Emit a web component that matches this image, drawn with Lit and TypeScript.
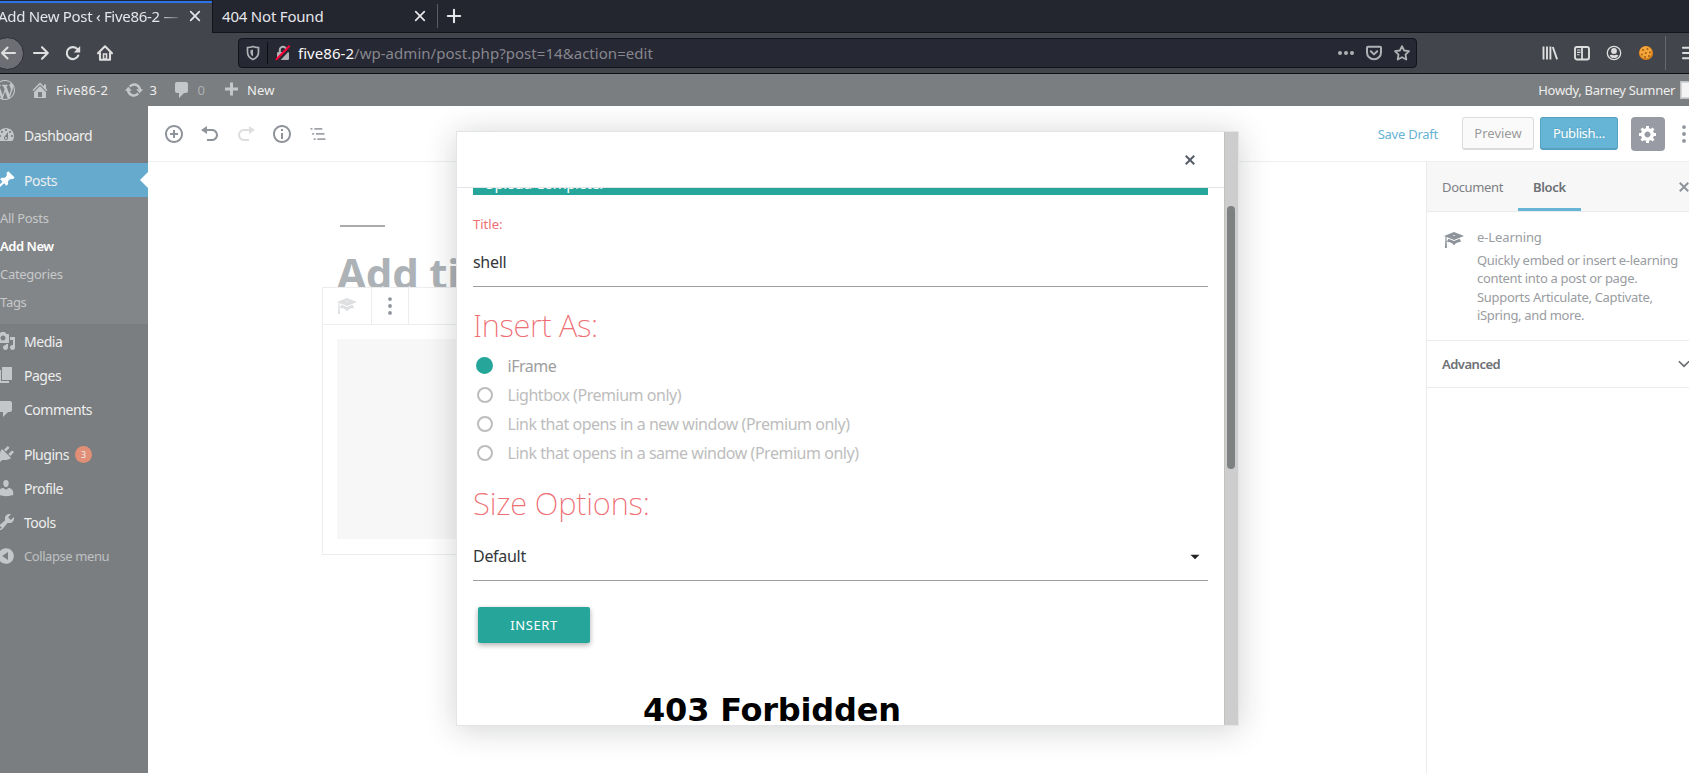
import { LitElement, html, css, svg } from "lit";
import { customElement, property } from "lit/decorators.js";

const D: Record<string, string> = {
  wp: "M20 10c0-5.51-4.49-10-10-10C4.48 0 0 4.49 0 10c0 5.52 4.48 10 10 10 5.51 0 10-4.48 10-10zM7.78 15.37L4.37 6.22c.55-.02 1.17-.08 1.17-.08.5-.06.44-1.13-.06-1.11 0 0-1.45.11-2.37.11-.18 0-.37 0-.58-.01C4.12 2.69 6.87 1.11 10 1.11c2.33 0 4.45.87 6.05 2.34-.68-.11-1.65.39-1.65 1.58 0 .74.45 1.36.9 2.1.35.61.55 1.36.55 2.46 0 1.49-1.4 5-1.4 5l-3.03-8.37c.54-.02.82-.17.82-.17.5-.05.44-1.25-.06-1.22 0 0-1.44.12-2.38.12-.87 0-2.33-.12-2.33-.12-.5-.03-.56 1.2-.06 1.22l.92.08 1.26 3.41zM17.41 10c.24-.64.74-1.87.43-4.25.7 1.29 1.05 2.71 1.05 4.25 0 3.29-1.73 6.24-4.4 7.78.97-2.59 1.94-5.2 2.92-7.78zM6.1 18.09C3.12 16.65 1.11 13.53 1.11 10c0-1.3.23-2.48.72-3.59C3.25 10.3 4.67 14.2 6.1 18.09zm4.03-6.63l2.58 6.98c-.86.29-1.76.45-2.71.45-.79 0-1.57-.11-2.29-.33.81-2.38 1.62-4.74 2.42-7.1z",
  home: "M16 8.5l1.53 1.53-1.06 1.06L10 4.6l-6.47 6.49-1.06-1.06L10 2.5l4 4v-2h2v4zm-6-2.46l6 5.99V18H4v-5.97zM12 17v-5H8v5h4z",
  update: "M10.2 3.28c3.53 0 6.43 2.61 6.92 6h2.08l-3.5 4-3.5-4h2.32c-.45-1.97-2.21-3.45-4.32-3.45-1.45 0-2.73.71-3.54 1.78L4.95 5.66C6.23 4.2 8.11 3.28 10.2 3.28zm-.4 13.44c-3.52 0-6.43-2.61-6.92-6H.8l3.5-4c1.17 1.33 2.33 2.67 3.5 4H5.48c.45 1.97 2.21 3.45 4.32 3.45 1.45 0 2.73-.71 3.54-1.78l1.71 1.95c-1.28 1.46-3.15 2.38-5.25 2.38z",
  comments: "M5 2h9c1.1 0 2 .9 2 2v7c0 1.1-.9 2-2 2h-2l-5 5v-5H5c-1.1 0-2-.9-2-2V4c0-1.1.9-2 2-2z",
  plus: "M17 7.5v3h-5v5H9v-5H4v-3h5v-5h3v5h5z",
  dashboard: "M3.76 16h12.48c1.1-1.37 1.76-3.11 1.76-5 0-4.42-3.58-8-8-8s-8 3.58-8 8c0 1.89.66 3.63 1.76 5zM10 4c.55 0 1 .45 1 1s-.45 1-1 1-1-.45-1-1 .45-1 1-1zM6 6c.55 0 1 .45 1 1s-.45 1-1 1-1-.45-1-1 .45-1 1-1zm8 0c.55 0 1 .45 1 1s-.45 1-1 1-1-.45-1-1 .45-1 1-1zm-5.37 5.55L12 7v6c0 1.1-.9 2-2 2s-2-.9-2-2c0-.57.24-1.08.63-1.45zM4 10c.55 0 1 .45 1 1s-.45 1-1 1-1-.45-1-1 .45-1 1-1zm12 0c.55 0 1 .45 1 1s-.45 1-1 1-1-.45-1-1 .45-1 1-1zm-5 3c0-.55-.45-1-1-1s-1 .45-1 1 .45 1 1 1 1-.45 1-1z",
  post: "M10.44 3.02l1.82-1.82 6.36 6.35-1.83 1.82c-1.05-.68-2.48-.57-3.41.36l-.75.75c-.92.93-1.04 2.35-.35 3.41l-1.83 1.82-2.41-2.41-2.8 2.79c-.42.42-3.38 2.71-3.8 2.29s1.86-3.39 2.28-3.81l2.79-2.79L4.1 9.36l1.83-1.82c1.05.69 2.48.57 3.4-.36l.75-.75c.93-.92 1.05-2.35.36-3.41z",
  media: "M13 11V4c0-.55-.45-1-1-1h-1.67L9 1H5L3.67 3H2c-.55 0-1 .45-1 1v7c0 .55.45 1 1 1h10c.55 0 1-.45 1-1zM7 4.5c1.38 0 2.5 1.12 2.5 2.5S8.38 9.5 7 9.5 4.5 8.38 4.5 7 5.62 4.5 7 4.5zM14 6h5v10.5c0 1.38-1.12 2.5-2.5 2.5S14 17.88 14 16.5s1.12-2.5 2.5-2.5c.17 0 .34.02.5.05V9h-3V6zm-4 8.05V13h2v3.5c0 1.38-1.12 2.5-2.5 2.5S7 17.88 7 16.5 8.12 14 9.5 14c.17 0 .34.02.5.05z",
  page: "M6 15V2h10v13H6zm-1 1h8v2H3V5h2v11z",
  plugins: "M13.11 4.36L9.87 7.6 8 5.73l3.24-3.24c.35-.34 1.05-.2 1.56.32.52.51.66 1.21.31 1.55zm-8 1.77l.91-1.12 9.01 9.01-1.19.84c-.71.71-2.63 1.16-3.82 1.16H6.14L4.9 17.26c-.59.59-1.54.59-2.12 0-.59-.58-.59-1.53 0-2.12l1.24-1.24v-3.88c0-1.13.4-3.19 1.09-3.89zm7.26 3.97l3.24-3.24c.34-.35 1.04-.21 1.55.31.52.51.66 1.21.31 1.55l-3.24 3.25z",
  users: "M10 9.25c-2.27 0-2.73-3.44-2.73-3.44C7 4.02 7.82 2 9.97 2c2.16 0 2.98 2.02 2.71 3.81 0 0-.41 3.44-2.68 3.44zm0 2.57L12.72 10c2.39 0 4.52 2.33 4.52 4.53v2.49s-3.65 1.13-7.24 1.13c-3.65 0-7.24-1.13-7.24-1.13v-2.49c0-2.25 1.94-4.48 4.47-4.48z",
  tools: "M16.68 9.77c-1.34 1.34-3.3 1.67-4.95.99l-5.41 6.52c-.99.99-2.59.99-3.58 0s-.99-2.59 0-3.57l6.52-5.42c-.68-1.65-.35-3.61.99-4.95 1.28-1.28 3.12-1.62 4.72-1.06l-2.89 2.89 2.82 2.82 2.86-2.87c.53 1.58.18 3.39-1.08 4.65zM3.81 16.21c.4.39 1.04.39 1.43 0 .4-.4.4-1.04 0-1.43-.39-.4-1.03-.4-1.43 0-.39.39-.39 1.03 0 1.43z",
  collapse: "M10 2.16c4.33 0 7.84 3.51 7.84 7.84s-3.51 7.84-7.84 7.84S2.16 14.33 2.16 10 5.71 2.16 10 2.16zm2 11.72V6.12L6.18 9.97z",
  insert: "M10 1c-5 0-9 4-9 9s4 9 9 9 9-4 9-9-4-9-9-9zm0 16c-3.9 0-7-3.1-7-7s3.1-7 7-7 7 3.1 7 7-3.1 7-7 7zm1-11H9v3H6v2h3v3h2v-3h3V9h-3V6z",
  undo: "M12 5H7V2L1 6l6 4V7h5c2.2 0 4 1.8 4 4s-1.8 4-4 4H7v2h5c3.3 0 6-2.7 6-6s-2.7-6-6-6z",
  redo: "M8 5h5V2l6 4-6 4V7H8c-2.2 0-4 1.8-4 4s1.8 4 4 4h5v2H8c-3.3 0-6-2.7-6-6s2.7-6 6-6z",
  info: "M9 15h2V9H9v6zm1-14c-5 0-9 4-9 9s4 9 9 9 9-4 9-9-4-9-9-9zm0 16c-3.9 0-7-3.1-7-7s3.1-7 7-7 7 3.1 7 7-3.1 7-7 7zM9 7h2V5H9v2z",
  outline: "M2.5 4h2v1.7h-2zM6.3 4h8v1.7h-8zM4.2 9h2v1.7h-2zM8 9h8.5v1.7H8zM5.7 14.2h2v1.7h-2zM9.3 14.2h8.2v1.7H9.3z",
  gear: "M18 12h-2.18c-.17.7-.44 1.35-.81 1.93l1.54 1.54-2.1 2.1-1.54-1.54c-.58.36-1.23.63-1.91.79V19H8v-2.18c-.68-.16-1.33-.43-1.91-.79l-1.54 1.54-2.12-2.12 1.54-1.54c-.36-.58-.63-1.23-.79-1.91H1V9.03h2.17c.16-.7.44-1.35.8-1.94L2.43 5.55l2.1-2.1 1.54 1.54c.58-.37 1.24-.64 1.93-.81V2h3v2.18c.68.16 1.33.43 1.91.79l1.54-1.54 2.12 2.12-1.54 1.54c.36.59.64 1.24.8 1.94H18V12zm-8.5 1.5c1.66 0 3-1.34 3-3s-1.34-3-3-3-3 1.34-3 3 1.34 3 3 3z",
  learn: "M10 10L2.54 7.02 3 18H1l.48-11.41L0 6l10-4 10 4zm0-5c-.55 0-1 .22-1 .5s.45.5 1 .5 1-.22 1-.5-.45-.5-1-.5zm0 6l5.57-2.23c.71.94 1.2 2.07 1.36 3.3-.3-.04-.61-.07-.93-.07-2.55 0-4.78 1.37-6 3.41C8.78 13.37 6.55 12 4 12c-.32 0-.63.03-.93.07.16-1.23.65-2.36 1.36-3.3z",
  close: "M14.95 6.46L11.41 10l3.54 3.54-1.41 1.41L10 11.42l-3.53 3.53-1.42-1.42L8.58 10 5.05 6.47l1.42-1.42L10 8.58l3.54-3.53z",
  dots: "M10 1.2a1.9 1.9 0 1 1 0 3.8 1.9 1.9 0 0 1 0-3.8zm0 6.9a1.9 1.9 0 1 1 0 3.8 1.9 1.9 0 0 1 0-3.8zm0 6.9a1.9 1.9 0 1 1 0 3.8 1.9 1.9 0 0 1 0-3.8z",
  caret: "M5.500 7.800h9l-4.500 4.400z",
  chevron: "M4.300 5.800L2.800 7.300l7.200 7 7.200-7-1.500-1.500-5.700 5.500z",
};

@customElement("dash-icon")
export class DashIcon extends LitElement {
  static styles = css`
    :host { display: block; flex: none; width: 20px; height: 20px; }
    svg { display: block; width: 100%; height: 100%; }
  `;
  @property() name = "";
  render() {
    return html`<svg viewBox="0 0 20 20" fill="currentColor"><path fill-rule="evenodd" d=${D[this.name]}></path></svg>`;
  }
}

const line = (d: string, w = 2) => svg`<path d=${d} fill="none" stroke="currentColor" stroke-width=${w} stroke-linecap="round" stroke-linejoin="round"></path>`;
const C: Record<string, unknown> = {
  x: line("M3.700 3.700l8.600 8.600M12.300 3.700l-8.600 8.600", 1.7),
  plus: line("M8 1.8v12.400M1.800 8h12.400", 2.1),
  back: line("M15 8H2M7.5 2.5L2 8l5.500 5.500", 2.1),
  fwd: line("M1 8h13.500M9 2.200L14.800 8 9 13.800", 2.1),
  reload: svg`${line("M13.300 10.500a6 6 0 1 1-1.300-6.700l1.500 1.500", 2.1)}<path d="M15.200 1v6.500H8.800z" fill="currentColor"></path>`,
  home: svg`${line("M1 8.300l7-7 7 7M3 8v6.700h10V8", 2.1)}<path d="M6.500 14V9h3v5z" fill="none" stroke="currentColor" stroke-width="1.600"></path>`,
  shield: svg`<path d="M8 1.500c2 .9 3.800 1 5.500 1V7c0 3.500-2 6-5.500 7.500C4.500 13 2.500 10.500 2.500 7V2.500c1.700 0 3.500-.1 5.500-1z" fill="none" stroke="currentColor" stroke-width="1.700"></path><path d="M8 4.500v7C6 10 5.400 9 5.400 7V5.200C6.500 5.100 7 5 8 4.500z" fill="currentColor"></path>`,
  lock: svg`<rect x="2" y="7" width="12" height="8" rx="1.200" fill="currentColor"></rect><path d="M4.800 8V5a3.200 3.200 0 0 1 6.400 0v3" fill="none" stroke="currentColor" stroke-width="2"></path><path d="M2.300 16L15.300 2" stroke="#262833" stroke-width="3.500"></path><path d="M1.500 14.300L14.200 1.200" stroke="#ff0039" stroke-width="2" stroke-linecap="round"></path>`,
  more: svg`<circle cx="2" cy="8" r="2" fill="currentColor"></circle><circle cx="8" cy="8" r="2" fill="currentColor"></circle><circle cx="14" cy="8" r="2" fill="currentColor"></circle>`,
  pocket: svg`${line("M1.900 1.800h12.200c.5 0 .9.400.9.900V7.500a7 6.800 0 0 1-14 0V2.700c0-.5.400-.9.900-.9z", 2)}${line("M4.800 6.300L8 9.400l3.200-3.100", 2)}`,
  star: line("M8 1.100l2.100 4.400 4.900.7-3.500 3.400.8 4.900L8 12.200l-4.300 2.300.8-4.900L1 6.200l4.900-.7z", 1.8),
  library: svg`<path d="M1.500 1.500v13M5 1.500v13M8.400 1.500v13M10.800 2l4.300 12.400" stroke="currentColor" stroke-width="1.900" fill="none"></path>`,
  side: svg`<rect x="1" y="2" width="14" height="12.500" rx="2" fill="none" stroke="currentColor" stroke-width="1.900"></rect><path d="M8 2v12" stroke="currentColor" stroke-width="1.800"></path><path d="M3 5h3.500M3 7.400h3.500M3 9.800h2.500" stroke="currentColor" stroke-width="1.100"></path>`,
  account: svg`<circle cx="8" cy="8" r="6.700" fill="none" stroke="currentColor" stroke-width="1.300"></circle><circle cx="8" cy="6" r="2.900" fill="currentColor"></circle><path d="M3.600 10.500c1-.9 2.300-.9 3-.6.900.4 1.900.4 2.800 0 .7-.3 2-.3 3 .6-.8 1.700-2.500 2.600-4.400 2.600s-3.600-.9-4.400-2.600z" fill="currentColor"></path>`,
  cookie: svg`<circle cx="8" cy="8" r="7.100" fill="#d9811b"></circle><circle cx="7.600" cy="7.300" r="6" fill="#f4a63a"></circle><g fill="#a35a14"><circle cx="5" cy="5" r="1"></circle><circle cx="9.500" cy="4" r=".9"></circle><circle cx="7.800" cy="8" r="1"></circle><circle cx="12" cy="7.500" r="1"></circle><circle cx="4" cy="9.500" r=".9"></circle><circle cx="7" cy="12" r="1"></circle><circle cx="11" cy="11" r="1"></circle></g>`,
  menu: line("M2 2.800h13M2 8h13M2 13.200h13", 2.1),
};

@customElement("chrome-icon")
export class ChromeIcon extends LitElement {
  static styles = css`
    :host { display: block; flex: none; width: 16px; height: 16px; }
    svg { display: block; width: 100%; height: 100%; overflow: visible; }
  `;
  @property() name = "";
  render() {
    return html`<svg viewBox="0 0 16 16">${C[this.name]}</svg>`;
  }
}

const menuMid = [["media", "Media"], ["page", "Pages"], ["comments", "Comments"]];
const menuLow = [["plugins", "Plugins"], ["users", "Profile"], ["tools", "Tools"]];

@customElement("app-root")
export class AppRoot extends LitElement {
  static styles = css`
    :host{display:block;width:1689px;height:773px;overflow:hidden;position:relative;font-family:"Noto Sans","Open Sans",sans-serif;font-size:13px;background:#fff;color:#555d66}
    *{box-sizing:border-box}
    .tabs{display:flex;height:33px;background:#23252f;color:#e6e6ea;font-size:15px;letter-spacing:-.2px}
    .tab{display:flex;flex:none;align-items:center;height:33px;border-bottom:1px solid #14151b;border-left:1px solid #14151b;width:225px;padding:0 9px}
    .tab.on{width:212px;background:#42454c;border:0;padding:0 9px 1px 0;box-shadow:inset 0 1px #23252f,inset 0 3px #2b73e8;letter-spacing:-.3px}
    .tab span{flex:1;white-space:nowrap;overflow:hidden}
    .tab.on span{margin-left:-2px;-webkit-mask-image:linear-gradient(90deg,#000 160px,transparent 186px)}
    .rest{flex:1;display:flex;align-items:center;border-bottom:1px solid #14151b}
    .sep{width:1px;height:24px;background:#5b5d66;margin-right:8px}
    .nav{display:flex;align-items:center;height:41px;background:#42454c;border-bottom:1px solid #0f1013;color:#dededf}
    .nav>*{flex:none}
    .back{display:grid;place-items:center;width:33px;height:33px;border-radius:50%;background:#6c6e73;border:1px solid #2d2f35;margin-left:-9px;margin-right:9px}
    .ni{margin-right:16px}
    .url{display:flex;align-items:center;width:1179px;height:30px;border:1px solid #12131a;border-radius:4px;background:#262833;margin-left:125px;color:#b0b1b5;padding:0 6px;font-size:15px}
    .url i{width:1px;height:22px;background:#0d0e13;margin:0 7px 0 6px}
    .url p{flex:1;margin:0 0 0 7px;color:#86878e;letter-spacing:.04px}
    .url b{font-weight:400;color:#f9f9fa}
    .url .gp{margin-left:12px}
    .acts{display:flex;align-items:center;margin-left:125px;gap:16px}
    .acts i{width:1px;height:34px;background:#66686e;margin-left:-5px;margin-right:-1px}
    .bar{display:flex;align-items:center;height:32px;background:#7b7e80;color:#eee}
    .bar span{flex:none;margin-left:6px;white-space:nowrap}
    .bar dash-icon{color:#c4c7ca}
    .bar .wp{margin:0 15px 0 -5px}
    .bar .site{width:67.500px;letter-spacing:.2px}
    .bar .upd{width:22px}
    .bar .cmt{width:23.500px;color:#adb0b2}
    .bar .new{flex:1;letter-spacing:.2px}
    .bar .howdy{letter-spacing:-.3px;margin-right:5px}
    .bar .av{width:18px;height:18px;border:1px solid #bfc1c2;background:#f4f4f4;box-shadow:inset 0 0 0 1px #d5d5d5;margin-right:-9px}
    .body{display:grid;grid-template-columns:148px 1fr;height:667px}
    .side{background:#7b7e80;color:#eee;font-size:14px;letter-spacing:-.48px;overflow:hidden;padding-top:12px}
    .mi{display:flex;align-items:center;height:34px;position:relative}
    .mi dash-icon{margin-left:-4px;margin-right:8px;color:#c4c7ca}
    .mi.on{background:#66abce;margin-top:11px}
    .mi.on dash-icon{color:#fff}
    .mi.on::after{content:"";position:absolute;right:0;top:9px;border:8px solid transparent;border-left:0;border-right-color:#fff}
    .sub{background:#838688;height:127px;padding-top:7px;font-size:13px;letter-spacing:-.3px;color:#c6c9cb}
    .sub div{height:28px;line-height:28px}
    .sub .cur{font-weight:600;color:#fff;letter-spacing:-.45px}
    .badge{width:17px;height:17px;border-radius:50%;background:#e18f77;font-size:9px;letter-spacing:0;display:grid;place-items:center;margin-left:6px}
    .gap{height:11px}
    .col{font-size:13px;letter-spacing:-.42px;color:#bfc1c3}
    .main{display:grid;grid-template-columns:minmax(0,1fr);grid-template-rows:56px 1fr}
    .tools{display:flex;align-items:center;border-bottom:1px solid #edeff0;padding-left:16px;color:#8f949b}
    .tools>*{flex:none}
    .tools .l{display:flex;gap:16px;flex:1}
    .dis{opacity:.3}
    .thin{opacity:.85}
    .draft{color:#66b3d3;margin-right:24px;letter-spacing:-.25px}
    .btn{display:grid;place-items:center;height:33px;border-radius:3px;border:1px solid #dcdcdc;border-bottom-width:2px;background:#fafafa;color:#9b9b9b;width:72px}
    .btn.p{width:78px;margin:0 13px 0 6px;background:#66b5d6;border-color:#57a0bf;color:#fff;text-shadow:0 -1px 1px #57a0bf;letter-spacing:-.4px}
    .set{display:grid;place-items:center;width:34px;height:34px;border-radius:4px;background:#989ba3;color:#fff;margin-right:9px}
    .kebab{margin-right:-5px}
    .cols{display:grid;grid-template-columns:minmax(0,1fr) 263px}
    .canvas{padding:63px 0 0 174px;overflow:hidden}
    .rule{width:45px;height:2px;background:#ababab;margin-left:18px}
    .ttl{font-weight:700;font-size:42px;line-height:56px;height:60px;margin-left:15px;color:#adb2b7;padding-top:18px;overflow:hidden;letter-spacing:-.2px}
    .block{width:800px;border:1px solid #ebedee;height:268px;background:#fff}
    .bt{display:flex;height:37px;border-bottom:1px solid #ebedee}
    .bt div{display:grid;place-items:center;border-right:1px solid #ebedee;width:49px;color:#dddfe1}
    .bt div+div{width:37px;color:#8f949b}
    .ph{margin:14px;height:200px;background:#f7f7f7}
    .panel{border-left:1px solid #e9ebec;background:#fff;overflow:hidden}
    .pt{display:flex;height:50px;background:#f7f7f7;border-bottom:1px solid #e9ebec;line-height:50px;color:#7c7f83}
    .pt div{flex:none;padding-left:15px;height:49px;width:91px;letter-spacing:-.35px}
    .pt .on{width:63px;font-weight:600;border-bottom:3px solid #66b5d6;color:#6d7074}
    .pt dash-icon{margin:15px 0 0 93px;color:#8f949b}
    .info{display:flex;height:129px;border-bottom:1px solid #e9ebec;padding:16px 0 0 16px;gap:13px;color:#999ca1}
    .info dash-icon{margin:2px 0 0 1px;color:#8f949b}
    .info div{white-space:nowrap;letter-spacing:-.1px}
    .info p{margin:5px 0 0;line-height:18.300px;letter-spacing:-.31px}
    .adv{display:flex;align-items:center;height:47px;border-bottom:1px solid #e9ebec;padding-left:15px;font-weight:600;letter-spacing:-.5px;color:#6d7074}
    .adv span{flex:1}
    .adv dash-icon{width:16px;margin-right:-3px}
    .modal{position:absolute;left:456px;top:131px;width:783px;height:595px;background:#fff;border:1px solid #e2e4e7;box-shadow:0 3px 30px rgba(25,30,35,.2);display:grid;grid-template-columns:1fr 14px;grid-template-rows:100%}
    .in{display:flex;flex-direction:column;overflow:hidden}
    .mh{height:56px;flex:none;border-bottom:1px solid #e2e4e7;display:flex;justify-content:flex-end;align-items:center;padding-right:24.500px;color:#555d66}
    .mb{padding:0 16px;flex:1;overflow:hidden;color:#32373c}
    .up{height:7px;background:#26a69a;overflow:hidden;display:flex;align-items:flex-end;color:#fff;font-size:15px;letter-spacing:-.5px;padding-left:11px}
    .up span{line-height:20px;margin-bottom:2px}
    .red{color:#ee6e73}
    .lb{height:60px;line-height:59px}
    .fld{height:32px;line-height:14px;font-size:16px;letter-spacing:-.3px;border-bottom:1px solid #9e9e9e;display:flex;justify-content:space-between}
    .fld dash-icon{margin:-2px 3px 0 0;color:#222}
    h5{font-weight:200;font-size:31px;line-height:40px;margin:18px 0 6px;letter-spacing:-.35px}
    .h2{margin:16px 0 26px;letter-spacing:-.18px}
    .ra{display:flex;align-items:center;height:29px;font-size:16px;letter-spacing:-.47px;color:#bdbdbd}
    .ra i{width:16px;height:16px;border-radius:50%;border:2px solid #bdbdbd;margin:0 14.500px 0 4px}
    .ra.on{color:#9e9e9e}
    .ra.on i{width:17px;height:17px;margin:0 14.500px 0 3px;background:#26a69a;border-color:#26a69a}
    .ins{display:grid;place-items:center;width:112px;height:36px;background:#26a69a;color:#fff;border-radius:2px;letter-spacing:.6px;margin:26px 0 0 5px;box-shadow:0 2px 5px rgba(0,0,0,.2),0 2px 6px rgba(0,0,0,.14)}
    .fb{font:700 32px/38px "DejaVu Sans",sans-serif;color:#000;margin:48px 0 0 170px;letter-spacing:-.2px}
    .sb{background:#cdcdcd;border-left:1px solid #c2c2bd;padding:74px 0 0 2px}
    .sb div{width:8px;height:263px;border-radius:4px;background:#7d8181}
  `;
  item([i, t]: string[]) {
    return html`<div class="mi"><dash-icon name=${i}></dash-icon>${t}${t === "Plugins" ? html`<span class="badge">3</span>` : ""}</div>`;
  }
  render() {
    return html`
      <div class="tabs">
        <div class="tab on"><span>Add New Post ‹ Five86-2 —</span><chrome-icon name="x"></chrome-icon></div>
        <div class="tab"><span>404 Not Found</span><chrome-icon name="x"></chrome-icon></div>
        <div class="rest"><div class="sep"></div><chrome-icon name="plus"></chrome-icon></div>
      </div>
      <div class="nav">
        <div class="back"><chrome-icon name="back"></chrome-icon></div>
        <chrome-icon class="ni" name="fwd"></chrome-icon>
        <chrome-icon class="ni" name="reload"></chrome-icon>
        <chrome-icon name="home"></chrome-icon>
        <div class="url">
          <chrome-icon name="shield"></chrome-icon><i></i><chrome-icon name="lock"></chrome-icon>
          <p><b>five86-2</b>/wp-admin/post.php?post=14&amp;action=edit</p>
          <chrome-icon name="more"></chrome-icon><chrome-icon class="gp" name="pocket"></chrome-icon><chrome-icon class="gp" name="star"></chrome-icon>
        </div>
        <div class="acts">
          <chrome-icon name="library"></chrome-icon><chrome-icon name="side"></chrome-icon><chrome-icon name="account"></chrome-icon>
          <chrome-icon name="cookie"></chrome-icon><i></i><chrome-icon name="menu"></chrome-icon>
        </div>
      </div>
      <div class="bar">
        <dash-icon class="wp" name="wp"></dash-icon>
        <dash-icon name="home"></dash-icon><span class="site">Five86-2</span>
        <dash-icon name="update"></dash-icon><span class="upd">3</span>
        <dash-icon name="comments"></dash-icon><span class="cmt">0</span>
        <dash-icon name="plus"></dash-icon><span class="new">New</span>
        <span class="howdy">Howdy, Barney Sumner</span><div class="av"></div>
      </div>
      <div class="body">
        <div class="side">
          <div class="mi"><dash-icon name="dashboard"></dash-icon>Dashboard</div>
          <div class="mi on"><dash-icon name="post"></dash-icon>Posts</div>
          <div class="sub"><div>All Posts</div><div class="cur">Add New</div><div>Categories</div><div>Tags</div></div>
          ${menuMid.map(this.item)}
          <div class="gap"></div>
          ${menuLow.map(this.item)}
          <div class="mi col"><dash-icon name="collapse"></dash-icon>Collapse menu</div>
        </div>
        <div class="main">
          <div class="tools">
            <div class="l">
              <dash-icon name="insert"></dash-icon><dash-icon name="undo"></dash-icon><dash-icon class="dis" name="redo"></dash-icon>
              <dash-icon name="info"></dash-icon><dash-icon class="thin" name="outline"></dash-icon>
            </div>
            <span class="draft">Save Draft</span>
            <div class="btn">Preview</div>
            <div class="btn p">Publish…</div>
            <div class="set"><dash-icon name="gear"></dash-icon></div>
            <dash-icon class="kebab" name="dots"></dash-icon>
          </div>
          <div class="cols">
            <div class="canvas">
              <div class="rule"></div>
              <div class="ttl">Add title</div>
              <div class="block">
                <div class="bt"><div><dash-icon name="learn"></dash-icon></div><div><dash-icon name="dots"></dash-icon></div></div>
                <div class="ph"></div>
              </div>
            </div>
            <div class="panel">
              <div class="pt"><div>Document</div><div class="on">Block</div><dash-icon name="close"></dash-icon></div>
              <div class="info">
                <dash-icon name="learn"></dash-icon>
                <div>e-Learning<p>Quickly embed or insert e-learning<br>content into a post or page.<br>Supports Articulate, Captivate,<br>iSpring, and more.</p></div>
              </div>
              <div class="adv"><span>Advanced</span><dash-icon name="chevron"></dash-icon></div>
            </div>
          </div>
        </div>
      </div>
      <div class="modal">
        <div class="in">
          <div class="mh"><dash-icon name="close"></dash-icon></div>
          <div class="mb">
            <div class="up"><span>Upload Complete!</span></div>
            <div class="lb red">Title:</div>
            <div class="fld">shell</div>
            <h5 class="red">Insert As:</h5>
            <div class="ra on"><i></i>iFrame</div>
            <div class="ra"><i></i>Lightbox (Premium only)</div>
            <div class="ra"><i></i>Link that opens in a new window (Premium only)</div>
            <div class="ra"><i></i>Link that opens in a same window (Premium only)</div>
            <h5 class="red h2">Size Options:</h5>
            <div class="fld">Default<dash-icon name="caret"></dash-icon></div>
            <div class="ins">INSERT</div>
            <div class="fb">403 Forbidden</div>
          </div>
        </div>
        <div class="sb"><div></div></div>
      </div>
    `;
  }
}
